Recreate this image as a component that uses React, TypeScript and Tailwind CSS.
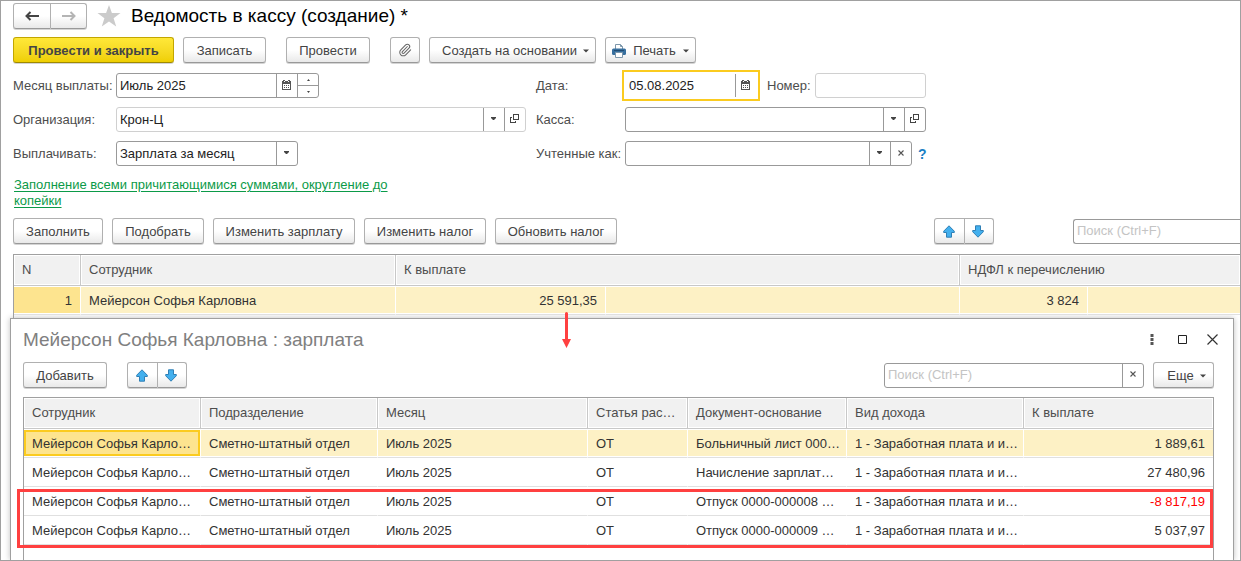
import { useId, type ReactNode } from "react";
import { Paperclip } from "lucide-react";

const buttonBase =
  "flex h-[26px] shrink-0 items-center justify-center rounded-[3px] border border-[#b0b0b0] border-b-[#999] bg-linear-to-b from-white from-50% to-[#e9e9e9] text-[#444] shadow-[0_1px_0_#d4d4d4]";

const fieldBox = "flex h-[25px] overflow-hidden rounded-[3px] border bg-white";
const fieldText = "min-w-0 flex-1 appearance-none bg-transparent pl-[3px] text-[#222] outline-none placeholder:text-[#c4c4c4]";

function Button({ children, className = "" }: { children: ReactNode; className?: string }) {
  return (
    <button type="button" className={`${buttonBase} pt-[2px] ${className}`}>
      {children}
    </button>
  );
}

function Caret({ small = false }: { small?: boolean }) {
  return small ? (
    <svg width="5" height="3" viewBox="0 0 5 3" fill="#444" aria-hidden="true">
      <path d="M0 0h5v1L3 3H2L0 1z" />
    </svg>
  ) : (
    <svg width="6" height="4" viewBox="0 0 6 4" fill="#444" aria-hidden="true">
      <path d="M0 0.5h6L3 3.5z" />
    </svg>
  );
}

function CalendarIcon() {
  return (
    <svg width="9" height="10" viewBox="0 0 9 10" shapeRendering="crispEdges" aria-hidden="true">
      <path fill="#555" d="M0 1h9v9H0zM1 0h2v1H1zM6 0h2v1H6z" />
      <path fill="#fff" d="M1 4h7v5H1zM2 1h1v1H2zM6 1h1v1H6z" />
      <path fill="#555" d="M2 5h1v1H2zM4 5h1v1H4zM6 5h1v1H6zM2 7h1v1H2zM4 7h1v1H4zM6 7h1v1H6z" />
    </svg>
  );
}

function OpenIcon() {
  return (
    <svg width="9" height="9" viewBox="0 0 9 9" fill="none" stroke="#444" shapeRendering="crispEdges" aria-hidden="true">
      <path d="M3.5 0.5h5v5h-5zM2 3.5H0.5v5h5V7" />
    </svg>
  );
}

function ClearIcon() {
  return (
    <svg width="6" height="6" viewBox="0 0 6 6" stroke="#555" strokeWidth="1.1" aria-hidden="true">
      <path d="M0.5 0.5l5 5M5.5 0.5l-5 5" />
    </svg>
  );
}

function PrinterIcon() {
  return (
    <svg width="14" height="14" viewBox="0 0 14 14" aria-hidden="true">
      <path d="M3.5 6V0.5h5l2 2V6" fill="#fff" stroke="#7d97ab" />
      <path d="M8.5 0.5v2h2" fill="none" stroke="#7d97ab" />
      <rect x="0" y="4.5" width="14" height="6.5" rx="1.5" fill="#376f9e" />
      <path d="M2 6.5h10" stroke="#1f4c74" />
      <path d="M3.5 8.5h7v5h-7z" fill="#fff" stroke="#7d97ab" />
    </svg>
  );
}

function BlueArrow({ down = false }: { down?: boolean }) {
  return (
    <svg width="12" height="13" viewBox="0 0 12 13" className={down ? "rotate-180" : ""} aria-hidden="true">
      <path
        d="M6 0.8L11.3 6.2V7.5H8.5V12.2H3.5V7.5H0.7V6.2z"
        fill="#43b0ee"
        stroke="#2f7fb5"
        strokeLinejoin="round"
      />
    </svg>
  );
}

function NavArrow({ right = false }: { right?: boolean }) {
  return (
    <svg
      width="14"
      height="10"
      viewBox="0 0 14 10"
      fill="none"
      stroke={right ? "#b4b4b4" : "#444"}
      strokeWidth="2"
      className={right ? "rotate-180" : ""}
      aria-hidden="true"
    >
      <path d="M1.5 5H14M5.5 1L1.5 5l4 4" />
    </svg>
  );
}

function MoveButtons() {
  return (
    <div className="flex shrink-0">
      <button type="button" aria-label="Переместить вверх" className={`${buttonBase} w-[31px] rounded-r-none pr-[2px]`}>
        <BlueArrow />
      </button>
      <button type="button" aria-label="Переместить вниз" className={`${buttonBase} w-[29px] rounded-l-none border-l-0 pr-[3px]`}>
        <BlueArrow down />
      </button>
    </div>
  );
}

function Addon({ label, children }: { label: string; children: ReactNode }) {
  return (
    <button type="button" aria-label={label} className="flex w-[21px] shrink-0 items-center justify-center border-l border-[#999] pr-px pb-[2px]">
      {children}
    </button>
  );
}

function SelectField({
  id,
  value,
  light = false,
  className = "",
  children,
}: {
  id: string;
  value: string;
  light?: boolean;
  className?: string;
  children?: ReactNode;
}) {
  return (
    <div className={`${fieldBox} ${light ? "border-[#d0d0d0]" : "border-[#999]"} ${className}`}>
      <select id={id} defaultValue={value} className={fieldText}>
        <option value={value}>{value}</option>
      </select>
      <span className="pointer-events-none -ml-[21px] flex w-[21px] shrink-0 items-center justify-center border-l border-[#999] pr-[2px] pb-[2px]">
        <Caret small />
      </span>
      {children}
    </div>
  );
}

function FieldRow({ id, label, wide, children }: { id: string; label: string; wide?: boolean; children: ReactNode }) {
  return (
    <div className="flex h-[25px] items-center">
      <label htmlFor={id} className={`shrink-0 whitespace-nowrap text-[#4d4d4d] ${wide ? "w-[89px]" : "w-[103px]"}`}>
        {label}
      </label>
      {children}
    </div>
  );
}

const headCell =
  "h-[31px] whitespace-nowrap border-r border-b border-[#c8c8c8] bg-[#f1f1f1] pl-[8px] text-left font-normal text-[#4d4d4d] shadow-[inset_0_0_0_1px_#fff] last:border-r-0";
const bodyCell =
  "h-[29px] whitespace-nowrap border-r border-b border-r-white border-b-[#e0e0e0] pt-[2px] pl-[8px] shadow-[inset_0_1px_0_#fff,inset_0_-1px_0_#fff] last:border-r-0";
const numberCell = `${bodyCell} pr-[8px] text-right`;

const payments = [
  { doc: "Больничный лист 000…", sum: "1 889,61" },
  { doc: "Начисление зарплат…", sum: "27 480,96" },
  { doc: "Отпуск 0000-000008 …", sum: "-8 817,19" },
  { doc: "Отпуск 0000-000009 …", sum: "5 037,97" },
];

export default function App() {
  const id = useId();
  return (
    <div className="flex h-screen flex-col overflow-hidden border border-[#a0a0a0] bg-white font-['Liberation_Sans',Arial,sans-serif] text-[13px] leading-4 text-[#333]">
      <main className="shrink-0 pt-[2px] pl-[12px]">
        <header className="flex h-[25px] items-center">
          <div className="flex">
            <button type="button" aria-label="Назад" className={`${buttonBase} w-[38px] rounded-r-none`}>
              <NavArrow />
            </button>
            <button type="button" aria-label="Вперед" className={`${buttonBase} w-[36px] rounded-l-none border-l-0`}>
              <NavArrow right />
            </button>
          </div>
          <svg width="24" height="22" viewBox="0 0 24 22" fill="#cbcbcb" className="ml-[10px]" aria-hidden="true">
            <path d="M12 0l2.9 8H23.5l-6.9 5.2L19.2 21.5 12 16.5 4.8 21.5l2.6-8.3L0.5 8H9.1z" />
          </svg>
          <h1 className="ml-[10px] text-[19px] leading-6 text-black">Ведомость в кассу (создание) *</h1>
        </header>

        <div className="mt-[9px] flex">
          <button
            type="button"
            className="flex h-[26px] w-[161px] items-center justify-center rounded-[3px] border border-[#c2a600] border-b-[#a08a00] bg-linear-to-b from-[#ffe838] to-[#efcf00] pt-[2px] font-bold text-[#444] shadow-[0_1px_0_#d4d4d4]"
          >
            Провести и закрыть
          </button>
          <Button className="ml-[9px] w-[83px]">Записать</Button>
          <Button className="ml-[20px] w-[84px]">Провести</Button>
          <button type="button" aria-label="Присоединенные файлы" className={`${buttonBase} ml-[20px] w-[30px]`}>
            <Paperclip size={14} strokeWidth={1.8} color="#666" />
          </button>
          <Button className="ml-[9px] w-[167px] gap-[6px] pl-[6px]">
            Создать на основании <Caret />
          </Button>
          <Button className="ml-[9px] w-[91px] gap-[7px]">
            <PrinterIcon />
            Печать <Caret />
          </Button>
        </div>

        <form className="mt-[10px] flex">
          <div className="flex w-[523px] shrink-0 flex-col gap-[9px]">
            <FieldRow id={`${id}month`} label="Месяц выплаты:">
              <div className={`${fieldBox} w-[203px] border-[#999]`}>
                <input id={`${id}month`} defaultValue="Июль 2025" className={fieldText} />
                <Addon label="Выбрать месяц">
                  <CalendarIcon />
                </Addon>
                <div className="flex w-[21px] shrink-0 flex-col border-l border-[#999]">
                  <button type="button" aria-label="Следующий месяц" className="flex flex-1 items-center justify-center">
                    <svg width="3" height="2" viewBox="0 0 3 2" fill="#444"><path d="M0 2h3L1.5 0z" /></svg>
                  </button>
                  <button type="button" aria-label="Предыдущий месяц" className="flex flex-1 items-center justify-center border-t border-[#999]">
                    <svg width="3" height="2" viewBox="0 0 3 2" fill="#444"><path d="M0 0h3L1.5 2z" /></svg>
                  </button>
                </div>
              </div>
            </FieldRow>
            <FieldRow id={`${id}org`} label="Организация:">
              <SelectField id={`${id}org`} value="Крон-Ц" light className="w-[410px]">
                <Addon label="Открыть организацию">
                  <OpenIcon />
                </Addon>
              </SelectField>
            </FieldRow>
            <FieldRow id={`${id}pay`} label="Выплачивать:">
              <SelectField id={`${id}pay`} value="Зарплата за месяц" className="w-[182px]" />
            </FieldRow>
          </div>

          <div className="flex flex-col gap-[9px]">
            <FieldRow id={`${id}date`} label="Дата:" wide>
              <div className="-ml-[3px] flex h-[31px] w-[138px] shrink-0 items-center border-2 border-[#fbcb1f] bg-white">
                <input id={`${id}date`} defaultValue="05.08.2025" className="h-[23px] min-w-0 flex-1 bg-transparent pl-[5px] text-[#222] outline-none" />
                <button type="button" aria-label="Выбрать дату" className="flex h-[23px] w-[23px] items-center justify-center border-l border-[#999] pr-[3px] pb-[2px]">
                  <CalendarIcon />
                </button>
              </div>
              <label htmlFor={`${id}num`} className="ml-[7px] w-[48px] shrink-0 text-[#4d4d4d]">
                Номер:
              </label>
              <div className={`${fieldBox} w-[111px] border-[#d0d0d0]`}>
                <input id={`${id}num`} className={fieldText} />
              </div>
            </FieldRow>
            <FieldRow id={`${id}cash`} label="Касса:" wide>
              <SelectField id={`${id}cash`} value="" className="w-[301px]">
                <Addon label="Открыть кассу">
                  <OpenIcon />
                </Addon>
              </SelectField>
            </FieldRow>
            <FieldRow id={`${id}acc`} label="Учтенные как:" wide>
              <SelectField id={`${id}acc`} value="" className="w-[287px]">
                <Addon label="Очистить">
                  <ClearIcon />
                </Addon>
              </SelectField>
              <button type="button" className="ml-[6px] text-[14px] font-bold text-[#1c7fc4]">
                ?
              </button>
            </FieldRow>
          </div>
        </form>

        <p className="mt-[11px] ml-px w-[400px]">
          <a href="#fill" className="text-[#0b9a48] underline underline-offset-2">
            Заполнение всеми причитающимися суммами, округление до копейки
          </a>
        </p>

        <div className="mt-[9px] flex items-center gap-[9px]">
          <Button className="w-[90px]">Заполнить</Button>
          <Button className="w-[92px]">Подобрать</Button>
          <Button className="w-[142px]">Изменить зарплату</Button>
          <Button className="w-[122px]">Изменить налог</Button>
          <Button className="w-[122px]">Обновить налог</Button>
          <div className="ml-auto flex items-center">
            <MoveButtons />
            <div className={`${fieldBox} ml-[79px] w-[167px] rounded-r-none border-r-0 border-[#999]`}>
              <input aria-label="Поиск" placeholder="Поиск (Ctrl+F)" className={fieldText} />
            </div>
          </div>
        </div>

        <div className="relative mt-[10px] border-t border-l border-[#a0a0a0] pb-[3px]">
          <table className="w-full table-fixed border-separate border-spacing-0">
            <colgroup>
              <col className="w-[67px]" />
              <col className="w-[315px]" />
              <col className="w-[210px]" />
              <col className="w-[354px]" />
              <col className="w-[128px]" />
              <col />
            </colgroup>
            <thead>
              <tr>
                <th className={headCell}>N</th>
                <th className={headCell}>Сотрудник</th>
                <th className={headCell} colSpan={2}>К выплате</th>
                <th className={headCell} colSpan={2}>НДФЛ к перечислению</th>
              </tr>
            </thead>
            <tbody>
              <tr className="bg-[#fdf1c5]">
                <td className={`${numberCell} bg-[#fde48f]`}>1</td>
                <td className={bodyCell}>Мейерсон Софья Карловна</td>
                <td className={numberCell}>25 591,35</td>
                <td className={bodyCell} />
                <td className={numberCell}>3 824</td>
                <td className={bodyCell} />
              </tr>
            </tbody>
          </table>
          <svg width="9" height="36" viewBox="0 0 9 36" fill="#ff4040" className="absolute top-[57px] left-[548px] z-10" aria-hidden="true">
            <path d="M3 1.5a1.5 1.5 0 0 1 3 0V27h3L4.5 36 0 27h3z" />
          </svg>
        </div>
      </main>

      <section
        role="dialog"
        aria-labelledby={`${id}title`}
        className="mr-[6px] ml-[9px] flex min-h-0 flex-1 flex-col border border-b-0 border-[#a0a0a0] bg-white pt-[9px] pr-[19px] pl-[12px] shadow-[0_0_6px_rgba(0,0,0,0.25)]"
      >
        <div className="flex h-6 shrink-0 items-center">
          <h2 id={`${id}title`} className="text-[19px] leading-6 text-[#808080]">
            Мейерсон Софья Карловна : зарплата
          </h2>
          <div className="-mr-[4px] ml-auto flex items-center gap-[20px] pb-[2px]">
            <button type="button" aria-label="Меню">
              <svg width="4" height="11" viewBox="0 0 4 11" fill="#555"><path d="M0.5 0h3v3h-3zM0.5 4h3v3h-3zM0.5 8h3v3h-3z" /></svg>
            </button>
            <button type="button" aria-label="Развернуть" className="ml-[4px]">
              <svg width="9" height="9" viewBox="0 0 9 9" fill="none" stroke="#222"><path d="M0.5 0.5h8v8h-8z" /></svg>
            </button>
            <button type="button" aria-label="Закрыть">
              <svg width="11" height="11" viewBox="0 0 11 11" stroke="#333" strokeWidth="1.2"><path d="M0.5 0.5l10 10M10.5 0.5l-10 10" /></svg>
            </button>
          </div>
        </div>

        <div className="mt-[10px] flex shrink-0 items-center">
          <Button className="w-[84px]">Добавить</Button>
          <div className="ml-[20px]">
            <MoveButtons />
          </div>
          <div className={`${fieldBox} ml-auto w-[260px] border-[#999]`}>
            <input aria-label="Поиск" placeholder="Поиск (Ctrl+F)" className={fieldText} />
            <Addon label="Очистить поиск">
              <ClearIcon />
            </Addon>
          </div>
          <Button className="ml-[9px] w-[61px] gap-[6px] pl-[6px]">
            Еще <Caret />
          </Button>
        </div>

        <div className="relative mt-[9px] flex-1 border border-b-0 border-[#a0a0a0]">
          <table className="w-full table-fixed border-separate border-spacing-0">
            <colgroup>
              <col className="w-[177px]" />
              <col className="w-[177px]" />
              <col className="w-[210px]" />
              <col className="w-[100px]" />
              <col className="w-[159px]" />
              <col className="w-[177px]" />
              <col />
            </colgroup>
            <thead>
              <tr>
                <th className={headCell}>Сотрудник</th>
                <th className={headCell}>Подразделение</th>
                <th className={headCell}>Месяц</th>
                <th className={headCell}>Статья рас…</th>
                <th className={headCell}>Документ-основание</th>
                <th className={headCell}>Вид дохода</th>
                <th className={headCell}>К выплате</th>
              </tr>
            </thead>
            <tbody>
              {payments.map((row, index) => (
                <tr key={row.doc} className={index === 0 ? "bg-[#fdf1c5]" : ""}>
                  <td className={`${bodyCell} relative`}>
                    {index === 0 && (
                      <span className="absolute inset-x-0 top-px bottom-px border-2 border-[#fbcb1f] bg-[#fde48f]" />
                    )}
                    <span className="relative block">Мейерсон Софья Карло…</span>
                  </td>
                  <td className={bodyCell}>Сметно-штатный отдел</td>
                  <td className={bodyCell}>Июль 2025</td>
                  <td className={bodyCell}>ОТ</td>
                  <td className={bodyCell}>{row.doc}</td>
                  <td className={bodyCell}>1 - Заработная плата и и…</td>
                  <td className={`${numberCell} ${row.sum.startsWith("-") ? "text-[#ff0000]" : ""}`}>{row.sum}</td>
                </tr>
              ))}
            </tbody>
          </table>
          <div className="pointer-events-none absolute top-[91px] right-0 -left-[7px] h-[59px] border-3 border-[#ff4040]" />
        </div>
      </section>
    </div>
  );
}
